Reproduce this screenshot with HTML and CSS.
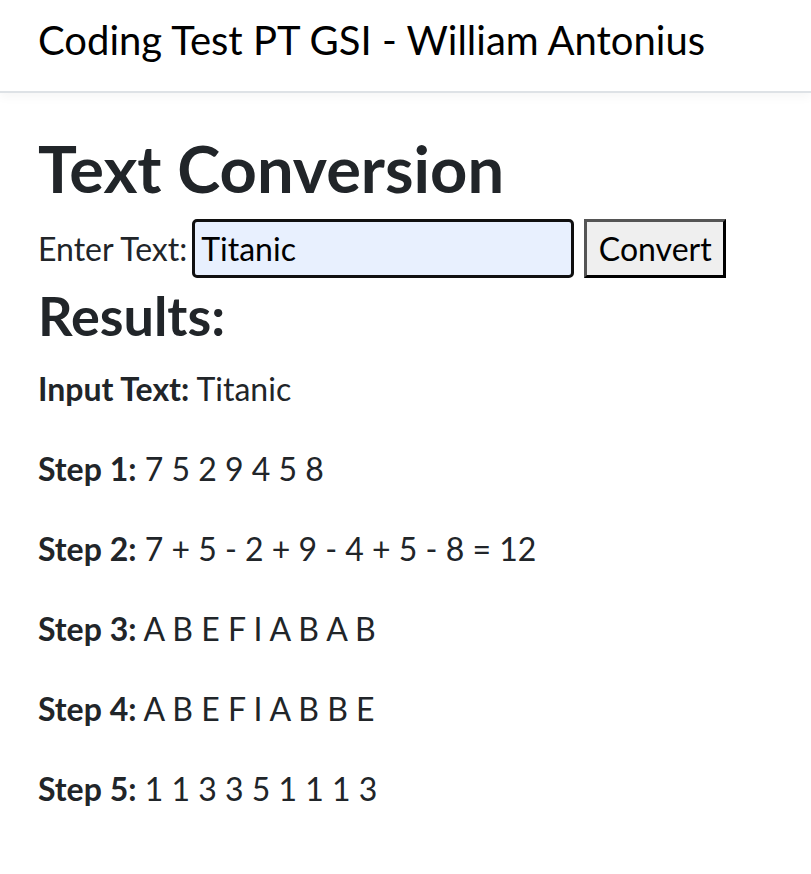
FILE: index.html
```html
<!DOCTYPE html>
<html>
<head>
<meta charset="utf-8">
<link rel="stylesheet" href="styles.css">
</head>
<body>
<nav class="navbar"><span class="brand">Coding Test PT GSI - William Antonius</span></nav>
<main class="container">
  <h1 class="title">Text Conversion</h1>
  <form class="form-row">
    <label class="label" for="t">Enter Text:</label>
    <input class="text-input" id="t" type="text" value="Titanic">
    <button class="btn" type="button">Convert</button>
  </form>
  <h2 class="results">Results:</h2>
  <p class="line"><strong>Input Text:</strong> Titanic</p>
  <p class="line"><strong>Step 1:</strong> 7 5 2 9 4 5 8</p>
  <p class="line"><strong>Step 2:</strong> 7 + 5 - 2 + 9 - 4 + 5 - 8 = 12</p>
  <p class="line"><strong>Step 3:</strong> A B E F I A B A B</p>
  <p class="line"><strong>Step 4:</strong> A B E F I A B B E</p>
  <p class="line"><strong>Step 5:</strong> 1 1 3 3 5 1 1 1 3</p>
</main>
</body>
</html>
```
FILE: styles.css
```css
html, body { margin: 0; padding: 0; }
body {
  font-family: Lato, "Noto Sans", sans-serif;
  color: #212529;
  background: #fff;
  font-size: 32px;
  line-height: 1.5;
}
.navbar {
  height: 93px;
  display: flex;
  align-items: center;
  padding: 0 38px;
  border-bottom: 2px solid #dee2e6;
  box-shadow: 0 4px 10px rgba(0,0,0,0.04);
  background: #fff;
  box-sizing: border-box;
}
.brand { font-size: 40px; color: #000; line-height: 1; padding-bottom: 12px; }
.container { padding: 0 38px; }
.title { font-size: 65px; font-weight: 700; margin: 36px 0 12px; line-height: 1.2; }
.form-row { display: flex; align-items: center; gap: 0; margin: 0; }
.label { font-size: 32px; color: #212529; margin-right: 5px; }
.text-input {
  width: 382px; height: 59px; box-sizing: border-box;
  border: 3px solid #101010; border-radius: 5px;
  background: #e8f0fe; font-family: inherit; font-size: 32px;
  padding: 0 6px; color: #000; outline: none;
}
.btn {
  margin-left: 10px; width: 142px; height: 59px; box-sizing: border-box;
  background: #efefef; border: 3px solid #000; border-top-color: #555; border-left-color: #555;
  font-family: inherit; font-size: 32px; color: #000; padding: 0;
}
.results { font-size: 54px; font-weight: 700; margin: 6px 0 16px; line-height: 1.2; }
.line { margin: 0 0 32px; }
.line strong { font-weight: 700; }
```
